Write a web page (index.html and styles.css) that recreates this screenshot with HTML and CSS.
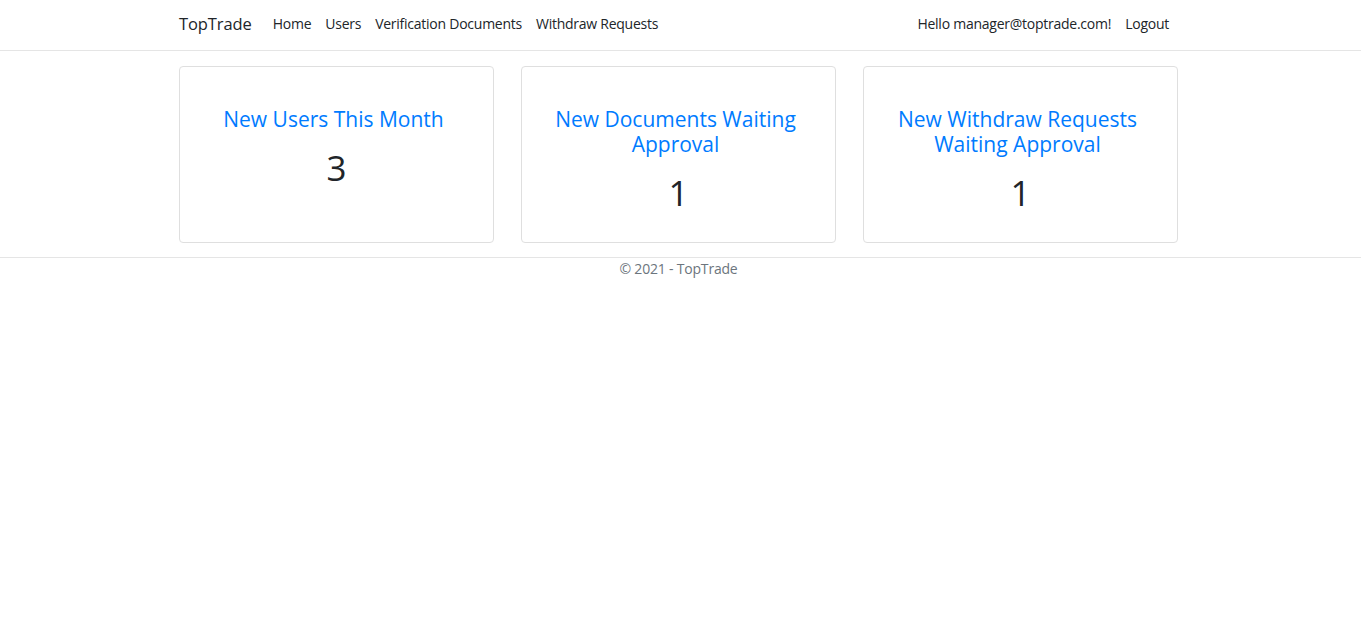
FILE: index.html
```html
<!DOCTYPE html>
<html lang="en">
<head>
<meta charset="utf-8">
<title>TopTrade</title>
<link rel="stylesheet" href="styles.css">
</head>
<body>
<header class="navbar">
  <div class="container nav-inner">
    <a class="brand" href="#">TopTrade</a>
    <ul class="nav-links">
      <li><a href="#">Home</a></li>
      <li><a href="#">Users</a></li>
      <li><a href="#">Verification Documents</a></li>
      <li><a href="#">Withdraw Requests</a></li>
    </ul>
    <ul class="nav-right">
      <li><span class="hello">Hello manager@toptrade.com!</span></li>
      <li><a href="#">Logout</a></li>
    </ul>
  </div>
</header>
<main class="container cards">
  <div class="card">
    <h4 class="card-title">New Users This Month</h4>
    <h1 class="card-num">3</h1>
  </div>
  <div class="card">
    <h4 class="card-title">New Documents Waiting Approval</h4>
    <h1 class="card-num">1</h1>
  </div>
  <div class="card">
    <h4 class="card-title">New Withdraw Requests Waiting Approval</h4>
    <h1 class="card-num">1</h1>
  </div>
</main>
<footer class="footer">
  <div class="container footer-inner">&copy; 2021 - TopTrade</div>
</footer>
</body>
</html>
```
FILE: styles.css
```css
* { box-sizing: border-box; }
html, body { margin: 0; padding: 0; }
body {
  font-family: "Open Sans", "Noto Sans", sans-serif;
  font-size: 14px;
  color: #212529;
  background: #fff;
}
a { text-decoration: none; color: inherit; }
ul { list-style: none; margin: 0; padding: 0; }
.container {
  width: 1003px;
  margin: 0 auto;
}
.navbar {
  border-bottom: 1px solid #e5e5e5;
  height: 51px;
}
.nav-inner {
  display: flex;
  align-items: center;
  height: 46px;
  letter-spacing: -0.25px;
}
.brand {
  font-size: 16.5px;
  letter-spacing: -0.1px;
  color: #212529;
  margin-right: 14px;
}
.nav-links { display: flex; flex: 1; }
.nav-links a, .nav-right a, .nav-right .hello {
  display: block;
  padding: 8px 7px;
  color: #212529;
}
.nav-right { display: flex; margin-right: 6px; }
.cards {
  display: grid;
  grid-template-columns: 315px 315px 315px;
  column-gap: 27px;
  padding: 15px 0 14px;
}
.card {
  border: 1px solid #dfdfdf;
  border-radius: 4px;
  padding: 40px 20px 20px;
  text-align: center;
  min-height: 177px;
}
.card-title {
  margin: 0 0 15px;
  padding-right: 6px;
  font-size: 21px;
  font-weight: 500;
  line-height: 1.2;
  color: #007bff;
}
.card-num {
  margin: 0;
  font-size: 35px;
  font-weight: 500;
  line-height: 1.2;
}
.footer {
  border-top: 1px solid #e5e5e5;
}
.footer-inner {
  text-align: center;
  color: #6c757d;
  padding-top: 1px;
  padding-right: 4px;
  line-height: 20px;
  letter-spacing: -0.2px;
}
```
